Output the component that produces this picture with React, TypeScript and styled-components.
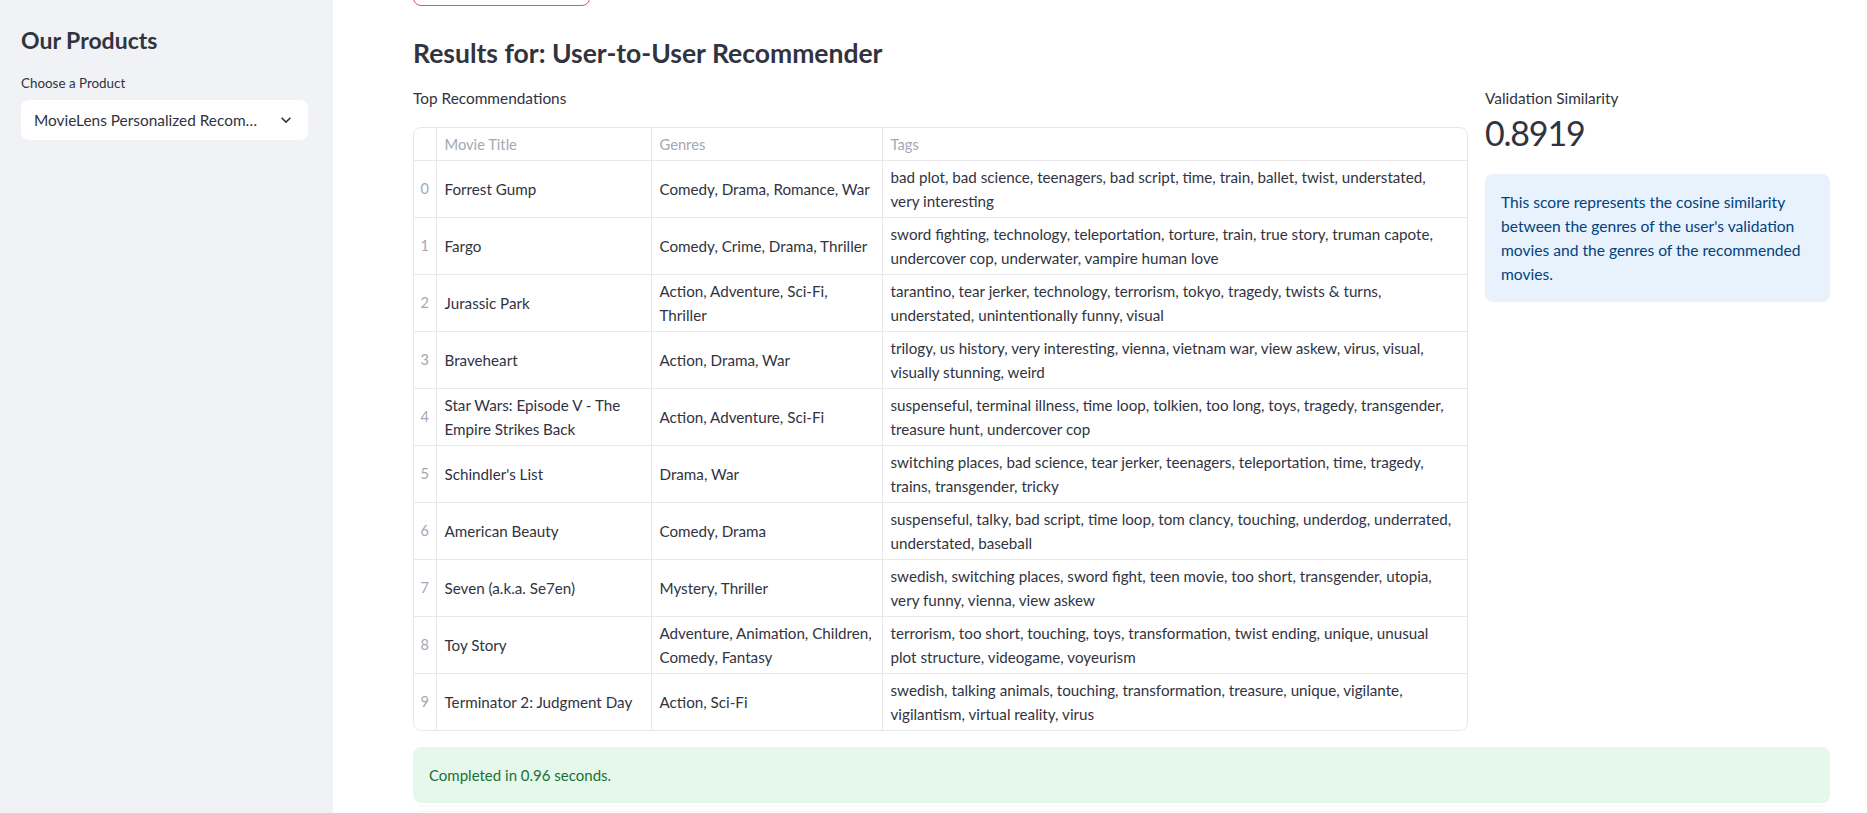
import React from "react";
import styled, { createGlobalStyle } from "styled-components";

const GlobalStyle = createGlobalStyle`
  html, body { margin: 0; padding: 0; background: #ffffff; }
  body { font-family: "Lato", "Noto Sans", sans-serif; color: #31333f; }
  * { box-sizing: border-box; }
`;

const Page = styled.div`
  display: grid;
  grid-template-columns: 333px 1fr;
  height: 813px;
  overflow: hidden;
`;

const Sidebar = styled.aside`
  background: #f0f2f6;
  padding: 26px 25px 0 21px;
  display: flex;
  flex-direction: column;
`;

const SidebarTitle = styled.h2`
  margin: 0;
  font-size: 23px;
  line-height: 29px;
  font-weight: 700;
  color: #31333f;
`;

const FieldLabel = styled.div`
  margin-top: 18px;
  font-size: 13.4px;
  line-height: 20px;
  color: #31333f;
`;

const Select = styled.div`
  margin-top: 7px;
  height: 40px;
  background: #ffffff;
  border-radius: 8px;
  display: flex;
  align-items: center;
  justify-content: space-between;
  padding: 0 12px 0 13px;
  font-size: 15.4px;
  color: #31333f;
`;

const SelectText = styled.span`
  white-space: nowrap;
  overflow: hidden;
  text-overflow: ellipsis;
`;

const Main = styled.main`
  padding: 0 37px 0 80px;
  display: flex;
  flex-direction: column;
`;

const GhostButton = styled.div`
  margin-top: -34px;
  width: 177px;
  height: 40px;
  border: 1px solid #ff4b4b;
  border-radius: 8px;
`;

const Heading = styled.h3`
  margin: 30px 0 18px;
  font-size: 26.5px;
  line-height: 34px;
  font-weight: 700;
  color: #31333f;
`;

const Columns = styled.div`
  display: grid;
  grid-template-columns: 1055px 345px;
  column-gap: 17px;
  align-items: start;
`;

const Column = styled.div`
  display: flex;
  flex-direction: column;
`;

const SmallLabel = styled.div`
  font-size: 15.4px;
  line-height: 20px;
  color: #31333f;
`;

const TableFrame = styled.div`
  margin-top: 19px;
  border: 1px solid #e8e8eb;
  border-radius: 8px;
  overflow: hidden;
`;

const Table = styled.table`
  width: 100%;
  border-collapse: collapse;
  table-layout: fixed;
  font-size: 15.2px;
  line-height: 24px;
`;

const HeadCell = styled.th<{ $w?: number }>`
  ${(p) => (p.$w ? `width: ${p.$w}px;` : "")}
  height: 32px;
  padding: 0 8px;
  text-align: left;
  font-weight: 400;
  font-size: 14.7px;
  color: #a3a8b4;
  border-right: 1px solid #e8e8eb;
  border-bottom: 1px solid #e8e8eb;
  &:last-child { border-right: none; }
`;

const Row = styled.tr`
  height: 57px;
  &:last-child td { border-bottom: none; }
`;

const IndexCell = styled.td`
  padding: 0;
  text-align: center;
  font-size: 14.5px;
  color: #a3a8b4;
  border-right: 1px solid #e8e8eb;
  border-bottom: 1px solid #e8e8eb;
`;

const Cell = styled.td`
  padding: 0 4px 0 8px;
  vertical-align: middle;
  color: #31333f;
  white-space: nowrap;
  overflow: hidden;
  border-right: 1px solid #e8e8eb;
  border-bottom: 1px solid #e8e8eb;
  &:last-child { border-right: none; }
`;

const Line = styled.div``;

const MetricLabel = styled.div`
  font-size: 15.4px;
  line-height: 20px;
  color: #31333f;
`;

const MetricValue = styled.div`
  margin-top: 3px;
  font-size: 34px;
  letter-spacing: -1.2px;
  line-height: 43px;
  color: #31333f;
`;

const Alert = styled.div<{ $tone: "info" | "success" }>`
  border-radius: 8px;
  padding: 16px;
  background: ${(p) => (p.$tone === "info" ? "#e8f2fc" : "#e6f8ec")};
  color: ${(p) => (p.$tone === "info" ? "#004280" : "#177233")};
  font-size: ${(p) => (p.$tone === "info" ? "15.6px" : "15px")};
  line-height: 24px;
`;

const InfoAlert = styled(Alert)`
  margin-top: 20px;
`;

const SuccessAlert = styled(Alert)`
  margin-top: 16px;
  width: 1417px;
`;

const FadedBlock = styled.div`
  margin: 2px 0 0 6px;
  width: 1406px;
  height: 7px;
  border-top: 1px solid #f2faf5;
  border-bottom: 1px solid #f4f5f6;
`;

type Movie = { title: string[]; genres: string[]; tags: string[] };

const movies: Movie[] = [
  {
    title: ["Forrest Gump"],
    genres: ["Comedy, Drama, Romance, War"],
    tags: ["bad plot, bad science, teenagers, bad script, time, train, ballet, twist, understated,", "very interesting"],
  },
  {
    title: ["Fargo"],
    genres: ["Comedy, Crime, Drama, Thriller"],
    tags: ["sword fighting, technology, teleportation, torture, train, true story, truman capote,", "undercover cop, underwater, vampire human love"],
  },
  {
    title: ["Jurassic Park"],
    genres: ["Action, Adventure, Sci-Fi,", "Thriller"],
    tags: ["tarantino, tear jerker, technology, terrorism, tokyo, tragedy, twists & turns,", "understated, unintentionally funny, visual"],
  },
  {
    title: ["Braveheart"],
    genres: ["Action, Drama, War"],
    tags: ["trilogy, us history, very interesting, vienna, vietnam war, view askew, virus, visual,", "visually stunning, weird"],
  },
  {
    title: ["Star Wars: Episode V - The", "Empire Strikes Back"],
    genres: ["Action, Adventure, Sci-Fi"],
    tags: ["suspenseful, terminal illness, time loop, tolkien, too long, toys, tragedy, transgender,", "treasure hunt, undercover cop"],
  },
  {
    title: ["Schindler's List"],
    genres: ["Drama, War"],
    tags: ["switching places, bad science, tear jerker, teenagers, teleportation, time, tragedy,", "trains, transgender, tricky"],
  },
  {
    title: ["American Beauty"],
    genres: ["Comedy, Drama"],
    tags: ["suspenseful, talky, bad script, time loop, tom clancy, touching, underdog, underrated,", "understated, baseball"],
  },
  {
    title: ["Seven (a.k.a. Se7en)"],
    genres: ["Mystery, Thriller"],
    tags: ["swedish, switching places, sword fight, teen movie, too short, transgender, utopia,", "very funny, vienna, view askew"],
  },
  {
    title: ["Toy Story"],
    genres: ["Adventure, Animation, Children,", "Comedy, Fantasy"],
    tags: ["terrorism, too short, touching, toys, transformation, twist ending, unique, unusual", "plot structure, videogame, voyeurism"],
  },
  {
    title: ["Terminator 2: Judgment Day"],
    genres: ["Action, Sci-Fi"],
    tags: ["swedish, talking animals, touching, transformation, treasure, unique, vigilante,", "vigilantism, virtual reality, virus"],
  },
];

const Lines = ({ lines }: { lines: string[] }) => (
  <>
    {lines.map((l, i) => (
      <Line key={i}>{l}</Line>
    ))}
  </>
);

const Chevron = () => (
  <svg width="20" height="20" viewBox="0 0 24 24" fill="#31333f">
    <path d="M16.59 8.59L12 13.17 7.41 8.59 6 10l6 6 6-6z" />
  </svg>
);

export default function App() {
  return (
    <>
      <GlobalStyle />
      <Page>
        <Sidebar>
          <SidebarTitle>Our Products</SidebarTitle>
          <FieldLabel>Choose a Product</FieldLabel>
          <Select>
            <SelectText>MovieLens Personalized Recom…</SelectText>
            <Chevron />
          </Select>
        </Sidebar>
        <Main>
          <GhostButton />
          <Heading>Results for: User-to-User Recommender</Heading>
          <Columns>
            <Column>
              <SmallLabel>Top Recommendations</SmallLabel>
              <TableFrame>
                <Table>
                  <thead>
                    <tr>
                      <HeadCell $w={22} />
                      <HeadCell $w={215}>Movie Title</HeadCell>
                      <HeadCell $w={231}>Genres</HeadCell>
                      <HeadCell>Tags</HeadCell>
                    </tr>
                  </thead>
                  <tbody>
                    {movies.map((m, i) => (
                      <Row key={i}>
                        <IndexCell>{i}</IndexCell>
                        <Cell>
                          <Lines lines={m.title} />
                        </Cell>
                        <Cell>
                          <Lines lines={m.genres} />
                        </Cell>
                        <Cell>
                          <Lines lines={m.tags} />
                        </Cell>
                      </Row>
                    ))}
                  </tbody>
                </Table>
              </TableFrame>
            </Column>
            <Column>
              <MetricLabel>Validation Similarity</MetricLabel>
              <MetricValue>0.8919</MetricValue>
              <InfoAlert $tone="info">
                This score represents the cosine similarity between the genres of the user's validation movies and
                the genres of the recommended movies.
              </InfoAlert>
            </Column>
          </Columns>
          <SuccessAlert $tone="success">Completed in 0.96 seconds.</SuccessAlert>
          <FadedBlock />
        </Main>
      </Page>
    </>
  );
}
